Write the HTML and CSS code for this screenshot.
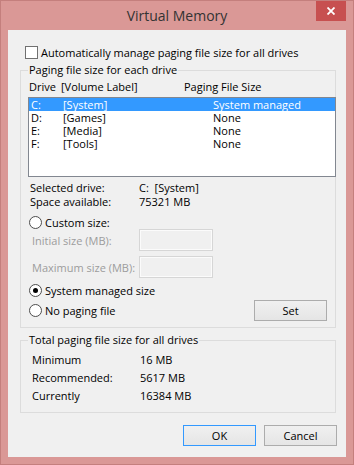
FILE: index.html
```html
<!DOCTYPE html>
<html lang="en">
<head>
    <meta charset="UTF-8">
    <meta name="viewport" content="width=device-width, initial-scale=1.0">
    <title>Virtual Memory</title>
    <link rel="stylesheet" href="styles.css">
</head>
<body>
    <div class="window">
        <div class="titlebar">
            <span class="title">Virtual Memory</span>
            <button type="button" class="close" aria-label="Close">
                <svg width="8" height="8" viewBox="0 0 8 8"><path d="M0.5 0.5 L7.5 7.5 M7.5 0.5 L0.5 7.5" stroke="#fff" stroke-width="1.8"/></svg>
            </button>
        </div>

        <div class="client">
            <div class="check-row">
                <span class="checkbox"></span>
                <span>Automatically manage paging file size for all drives</span>
            </div>

            <fieldset class="group drives">
                <legend>Paging file size for each drive</legend>
                <div class="list-head">
                    <span>Drive</span>
                    <span>[Volume Label]</span>
                    <span>Paging File Size</span>
                </div>
                <div class="listbox">
                    <div class="list-row selected"><span>C:</span><span>[System]</span><span>System managed</span></div>
                    <div class="list-row"><span>D:</span><span>[Games]</span><span>None</span></div>
                    <div class="list-row"><span>E:</span><span>[Media]</span><span>None</span></div>
                    <div class="list-row"><span>F:</span><span>[Tools]</span><span>None</span></div>
                </div>

                <div class="info">
                    <span>Selected drive:</span><span>C:&nbsp;&nbsp;[System]</span>
                    <span>Space available:</span><span>75321 MB</span>
                </div>

                <div class="radio-row custom"><span class="radio"></span><span>Custom size:</span></div>
                <div class="size-row"><span class="disabled">Initial size (MB):</span><span class="field"></span></div>
                <div class="size-row second"><span class="disabled">Maximum size (MB):</span><span class="field"></span></div>
                <div class="radio-row managed"><span class="radio checked"></span><span>System managed size</span></div>
                <div class="radio-row nofile">
                    <span class="radio"></span><span>No paging file</span>
                    <button type="button" class="btn set">Set</button>
                </div>
            </fieldset>

            <fieldset class="group totals">
                <legend>Total paging file size for all drives</legend>
                <div class="total-row"><span>Minimum</span><span>16 MB</span></div>
                <div class="total-row"><span>Recommended:</span><span>5617 MB</span></div>
                <div class="total-row"><span>Currently</span><span>16384 MB</span></div>
            </fieldset>

            <div class="actions">
                <button type="button" class="btn default">OK</button>
                <button type="button" class="btn">Cancel</button>
            </div>
        </div>
    </div>
</body>
</html>
```

FILE: styles.css
```css
* {
    box-sizing: border-box;
}
body {
    margin: 0;
    font-family: "Open Sans", "Noto Sans", sans-serif;
    font-size: 11px;
    color: #000;
}
.window {
    width: 354px;
    height: 465px;
    background: #da9896;
    border: 1px solid #c47f7d;
    padding: 0 7px 7px;
    display: flex;
    flex-direction: column;
}
.titlebar {
    height: 29px;
    display: grid;
    grid-template-columns: 1fr auto 1fr;
    align-items: center;
}
.title {
    grid-column: 2;
    font-size: 14px;
    color: #333;
}
.close {
    grid-column: 3;
    justify-self: end;
    align-self: start;
    width: 30px;
    height: 20px;
    padding: 0;
    border: none;
    background: #c75050;
    display: flex;
    align-items: center;
    justify-content: center;
}
.client {
    flex: 1;
    background: #f0f0f0;
}
.check-row {
    display: flex;
    align-items: center;
    gap: 3px;
    height: 13px;
    margin: 16px 0 0 17px;
    line-height: 13px;
}
.checkbox {
    width: 13px;
    height: 13px;
    border: 1px solid #707070;
    background: #fff;
}
.group {
    margin: 4px 10px 0 12px;
    padding: 3px 0 6px 7px;
    border: 1px solid #dcdcdc;
    min-width: 0;
}
.group legend {
    padding: 0 1px;
    line-height: 14px;
}
.list-head {
    display: grid;
    grid-template-columns: 32px 123px 1fr;
    padding-left: 1px;
    line-height: 14px;
}
.listbox {
    margin: 3px -1px 0 0;
    height: 80px;
    border: 1px solid #828790;
    background: #fff;
}
.list-row {
    display: grid;
    grid-template-columns: 32px 150px 1fr;
    padding-left: 2px;
    height: 13px;
    line-height: 13px;
}
.list-row.selected {
    background: #3399ff;
    color: #fff;
}
.info {
    display: grid;
    grid-template-columns: 109px 1fr;
    margin-top: 4px;
    padding-left: 2px;
    line-height: 14px;
}
.radio-row {
    display: flex;
    align-items: center;
    gap: 3px;
    padding-left: 1px;
    height: 13px;
    line-height: 13px;
}
.radio-row.custom {
    margin-top: 7px;
}
.radio-row.managed {
    margin-top: 6px;
}
.radio-row.nofile {
    margin-top: 3px;
    height: 21px;
    padding-right: 8px;
}
.radio {
    width: 13px;
    height: 13px;
    border: 1px solid #4d4d4d;
    border-radius: 50%;
    background: #fff;
    display: flex;
    align-items: center;
    justify-content: center;
}
.radio.checked::after {
    content: "";
    width: 5px;
    height: 5px;
    border-radius: 50%;
    background: #000;
}
.size-row {
    display: grid;
    grid-template-columns: 107px 74px;
    align-items: center;
    padding-left: 4px;
    height: 22px;
}
.size-row.second {
    margin-top: 5px;
}
.disabled {
    color: #9c9c9c;
}
.field {
    height: 22px;
    border: 1px solid #d6d6d6;
    box-shadow: inset 0 0 0 1px #fbfbfb;
    background: #f0f0f0;
}
.btn {
    width: 73px;
    height: 21px;
    padding: 0;
    font-family: inherit;
    font-size: 11px;
    color: #000;
    border: 1px solid #acacac;
    background: linear-gradient(#f0f0f0, #e5e5e5);
}
.btn.set {
    margin-left: auto;
}
.btn.default {
    border-color: #3399ff;
}
.totals {
    margin-top: 5px;
    padding: 6px 0 9px 7px;
}
.total-row {
    display: grid;
    grid-template-columns: 108px 1fr;
    padding-left: 4px;
    line-height: 14px;
}
.total-row + .total-row {
    margin-top: 4px;
}
.actions {
    display: flex;
    justify-content: flex-end;
    gap: 8px;
    margin-top: 12px;
    padding-right: 9px;
}
```
